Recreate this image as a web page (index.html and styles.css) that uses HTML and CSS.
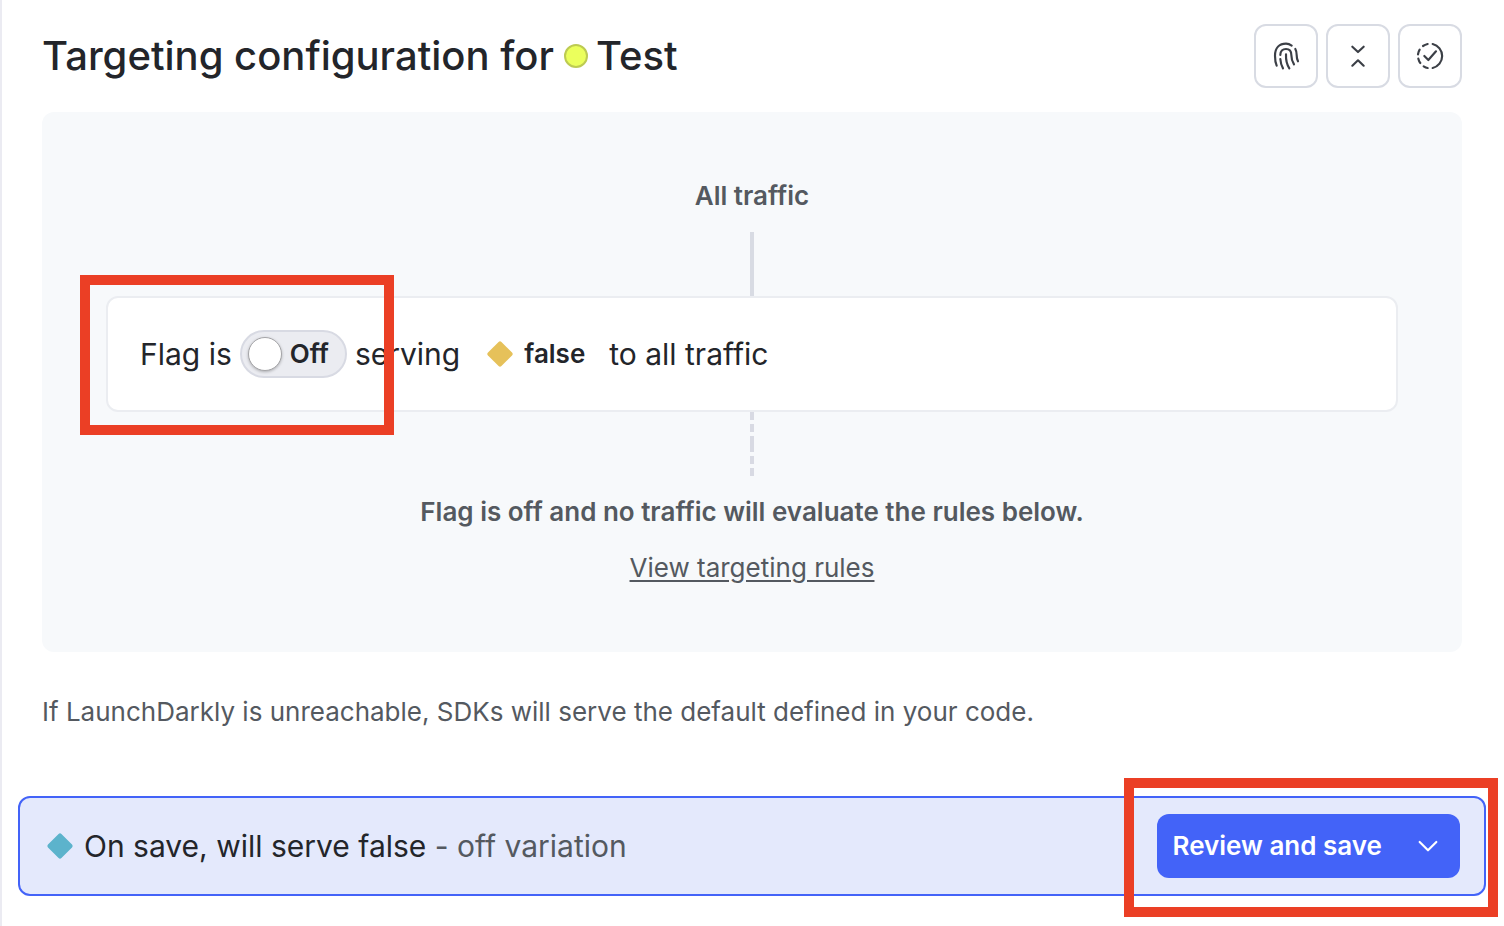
FILE: index.html
```html
<!DOCTYPE html>
<html lang="en">
<head>
<meta charset="utf-8">
<meta name="viewport" content="width=device-width, initial-scale=1">
<title>Targeting configuration</title>
<link rel="stylesheet" href="styles.css">
</head>
<body>
<main class="page">
  <header class="header">
    <h1 class="title"><span>Targeting configuration for</span><span class="environment"><span class="env-dot"></span>Test</span></h1>
    <div class="actions">
      <button class="icon-button" type="button" aria-label="Contexts">
        <svg class="icon" viewBox="0 0 96 96" aria-hidden="true"><path d="M20 77C16 68 15 57 15 47C15 24 28 11 48 11Q57 11 65 17M76 27Q80 34 80 45T84 64M31 45C31 34 38 27 48 27C59 27 64 35 64 45Q64 60 72 73M48 43Q47 69 58 85M31 57Q32 73 39 85"/></svg>
      </button>
      <button class="icon-button" type="button" aria-label="Collapse all">
        <svg class="icon" viewBox="0 0 96 96" aria-hidden="true"><path d="M31 20L48 36L65 20M31 77L48 61L65 77"/></svg>
      </button>
      <button class="icon-button" type="button" aria-label="Validate">
        <svg class="icon" viewBox="0 0 96 96" aria-hidden="true"><path d="M56 12A37 37 0 0 1 56 84M41 12Q33 14 27 18M17 29Q13 35 12 43M13 56Q15 64 19 69M29 79Q35 83 41 84M31 48L43 60L66 34"/></svg>
      </button>
    </div>
  </header>

  <section class="panel">
    <p class="flow-label">All traffic</p>
    <div class="connector"></div>
    <div class="card">
      <span id="flag-label">Flag is</span>
      <button class="toggle" type="button" role="switch" aria-checked="false" aria-labelledby="flag-label"><span class="knob"></span>Off</button>
      <span>serving</span>
      <span class="variation">
        <svg class="diamond diamond-yellow" viewBox="0 0 32 32" aria-hidden="true"><rect x="6.5" y="6.5" width="19" height="19" rx="2" transform="rotate(45 16 16)"/></svg>
        <strong class="variation-name">false</strong>
      </span>
      <span>to all traffic</span>
      <div class="highlight highlight-toggle"></div>
    </div>
    <div class="connector connector-dashed"></div>
    <p class="flow-label">Flag is off and no traffic will evaluate the rules below.</p>
    <a class="rules-link" href="#rules">View targeting rules</a>
  </section>

  <p class="note">If LaunchDarkly is unreachable, SDKs will serve the default defined in your code.</p>

  <section class="save-bar">
    <svg class="diamond diamond-teal" viewBox="0 0 32 32" aria-hidden="true"><rect x="6.5" y="6.5" width="19" height="19" rx="2" transform="rotate(45 16 16)"/></svg>
    <p class="save-text">On save, will serve false <span class="muted">- off variation</span></p>
    <button class="save-button" type="button">Review and save
      <svg class="icon" viewBox="0 0 96 96" aria-hidden="true"><path d="M23 36L48 61L73 36"/></svg>
    </button>
    <div class="highlight highlight-save"></div>
  </section>
</main>
</body>
</html>
```
FILE: styles.css
```css
* {
  box-sizing: border-box;
}

body {
  margin: 0;
  background: #fff;
  color: #23252a;
  font-family: Inter, "Liberation Sans", sans-serif;
  font-size: 26px;
  line-height: 40px;
}

h1,
p {
  margin: 0;
}

button {
  font: inherit;
  cursor: pointer;
}

.page {
  min-height: 100vh;
  padding: 24px 18px 24px 16px;
  border-left: 2px solid #ebebf2;
}

.header {
  display: flex;
  align-items: center;
  justify-content: space-between;
  margin: 0 24px 24px;
}

.title {
  display: flex;
  gap: 10px;
  font-size: 40px;
  font-weight: 500;
  line-height: 48px;
}

.environment {
  display: flex;
  align-items: center;
  gap: 8px;
}

.env-dot {
  width: 24px;
  height: 24px;
  border: 2px solid #bdcb52;
  border-radius: 50%;
  background: #ebff5c;
}

.actions {
  display: flex;
  gap: 8px;
}

.icon-button {
  display: grid;
  place-items: center;
  width: 64px;
  height: 64px;
  padding: 0;
  border: 2px solid #d8dbe3;
  border-radius: 12px;
  background: #fff;
  color: #3b3f46;
}

.icon {
  width: 32px;
  height: 32px;
  fill: none;
  stroke: currentColor;
  stroke-width: 6.5;
  stroke-linecap: round;
  stroke-linejoin: round;
}

.panel {
  display: flex;
  flex-direction: column;
  align-items: center;
  margin: 0 24px 40px;
  padding: 64px;
  border-radius: 12px;
  background: #f7f9fb;
  color: #545960;
}

.flow-label {
  font-weight: 600;
}

.connector {
  width: 4px;
  height: 64px;
  margin-top: 16px;
  background: #d8dbe3;
}

.connector-dashed {
  margin: 0 0 16px;
  background: linear-gradient(#d8dae3 8px, transparent 8px 12px, #d8dae3 12px 20px, transparent 20px 24px, #d8dae3 24px) 0 0 / 4px 32px;
}

.card {
  position: relative;
  display: flex;
  align-items: center;
  align-self: stretch;
  gap: 8px;
  padding: 32px;
  border: 2px solid #ebedf1;
  border-radius: 12px;
  background: #fff;
  color: #23252a;
  font-size: 30px;
}

.toggle {
  display: flex;
  align-items: center;
  gap: 8px;
  height: 48px;
  padding: 0 16px 0 6px;
  border: 2px solid #d8dae3;
  border-radius: 24px;
  background: #ebecf1;
  color: inherit;
  font-size: 26px;
  font-weight: 600;
}

.knob {
  width: 34px;
  height: 34px;
  border: 1px solid #a5a5a8;
  border-radius: 50%;
  background: #fff;
  box-shadow: 0 1px 3px #0004;
}

.variation {
  display: flex;
  align-items: center;
  gap: 8px;
  margin: 0 16px;
}

.variation-name {
  font-size: 26px;
  font-weight: 600;
}

.diamond {
  flex: none;
  width: 32px;
  height: 32px;
}

.diamond-yellow {
  fill: #e6c15a;
}

.diamond-teal {
  fill: #5cb3cc;
}

.rules-link {
  margin-top: 16px;
  color: inherit;
  text-underline-offset: 3px;
}

.note {
  margin: 0 24px 64px;
  color: #545960;
}

.save-bar {
  position: relative;
  display: flex;
  align-items: center;
  gap: 8px;
  padding: 16px 24px;
  border: 2px solid #4363f8;
  border-radius: 12px;
  background: #e4e9fc;
}

.save-text {
  flex: 1;
  font-size: 30px;
}

.muted {
  color: #545960;
}

.save-button {
  display: flex;
  align-items: center;
  gap: 30px;
  height: 64px;
  padding: 0 16px;
  border: 0;
  border-radius: 12px;
  background: #4363f8;
  color: #fff;
  font-weight: 600;
}

.highlight {
  position: absolute;
  border: 10px solid #eb3f25;
  pointer-events: none;
}

.highlight-toggle {
  top: -23px;
  bottom: -25px;
  left: -28px;
  width: 314px;
}

.highlight-save {
  top: -20px;
  right: -14px;
  bottom: -23px;
  width: 374px;
}
```
